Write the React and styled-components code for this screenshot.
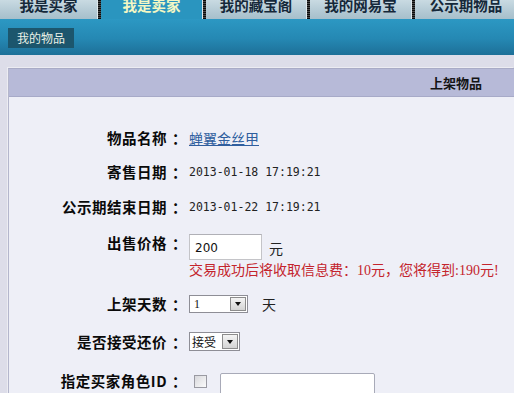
import React from "react";
import styled, { createGlobalStyle } from "styled-components";

const Global = createGlobalStyle`
  html, body { margin: 0; padding: 0; }
  body {
    background: #dddde9;
    font-family: "Noto Sans CJK SC", "Noto Sans", sans-serif;
    overflow: hidden;
    width: 514px;
    height: 393px;
  }
`;

const TabBar = styled.div`
  display: flex;
  height: 19px;
  overflow: hidden;
  background: #b2c8d3;
`;

const Tab = styled.div`
  flex: 0 0 ${(p) => p.w}px;
  height: 19px;
  display: flex;
  justify-content: center;
  align-items: flex-start;
  overflow: hidden;
  background: ${(p) =>
    p.active
      ? "#2a95bf"
      : "linear-gradient(#c9dae2, #b3c9d4 60%, #a6bfcb)"};
  color: ${(p) => (p.active ? "#f3f7c4" : "#15283a")};
  font-size: 14.5px;
  font-weight: 700;
`;

const TabText = styled.span`
  display: block;
  line-height: 15px;
  margin-top: -3px;
  white-space: nowrap;
`;

const Sep = styled.div`
  flex: 0 0 4px;
  height: 19px;
  border-left: 1px solid #dfe8ec;
  box-sizing: border-box;
  background: repeating-linear-gradient(#0c0c0c 0 1px, #4a4a4a 1px 2px);
`;

const SubBar = styled.div`
  height: 36px;
  background: linear-gradient(#2c98c3, #2588b3 55%, #1d7098);
  display: flex;
  align-items: flex-start;
  padding: 9px 0 0 8px;
  box-sizing: border-box;
`;

const SubTab = styled.div`
  width: 66px;
  height: 20px;
  background: #1c566d;
  color: #e9f1e6;
  font-size: 12px;
  line-height: 20px;
  text-align: center;
`;

const Page = styled.div`
  padding: 13px 0 0 8px;
`;

const Panel = styled.div`
  border-top: 1px solid #a9abc6;
  border-left: 1px solid #b4b6cc;
  box-shadow: -1px -1px 0 #ececf2;
  background: #eeeff7;
  height: 330px;
`;

const PanelHead = styled.div`
  height: 27px;
  background: #b7bad8;
  border-bottom: 1px solid #a7aac8;
  display: flex;
  justify-content: flex-end;
  align-items: center;
  padding-right: 32px;
  font-size: 13px;
  font-weight: 700;
  color: #141414;
`;

const Body = styled.div`
  padding-top: 24px;
`;

const Row = styled.div`
  display: grid;
  grid-template-columns: 178px 1fr;
  column-gap: 2px;
  height: ${(p) => p.h}px;
  align-items: ${(p) => (p.top ? "start" : "center")};
`;

const Label = styled.div`
  text-align: right;
  font-size: 14.5px;
  font-weight: 700;
  letter-spacing: 0.5px;
  color: #0a0a0a;
  line-height: 18px;
  margin-top: ${(p) => p.mt || 0}px;
  white-space: nowrap;
`;

const Colon = styled.span`
  margin-left: 5px;
`;

const Value = styled.div`
  display: flex;
  flex-direction: ${(p) => (p.col ? "column" : "row")};
  align-items: ${(p) => (p.col ? "flex-start" : "center")};
  margin-top: ${(p) => p.mt || 0}px;
`;

const ItemLink = styled.a`
  color: #2f5e9e;
  font-size: 14px;
  text-decoration: underline;
  cursor: pointer;
`;

const DateText = styled.span`
  font-family: "DejaVu Sans Mono", "Liberation Mono", monospace;
  font-size: 11.5px;
  color: #222;
`;

const PriceInput = styled.div`
  width: 73px;
  height: 26px;
  box-sizing: border-box;
  background: #fff;
  border: 1px solid #c4c4c8;
  border-top-color: #b0b0b6;
  font-family: "DejaVu Sans", sans-serif;
  font-size: 12px;
  color: #111;
  padding: 6px 0 0 5px;
`;

const Unit = styled.span`
  font-size: 14px;
  color: #222;
  margin-left: ${(p) => p.ml}px;
  margin-top: ${(p) => p.mt || 0}px;
`;

const InlineRow = styled.div`
  display: flex;
  align-items: center;
`;

const Notice = styled.div`
  color: #c4242c;
  font-size: 14px;
  line-height: 18px;
  white-space: nowrap;
  font-family: "Noto Sans CJK SC", sans-serif;
`;

const NumText = styled.span`
  font-family: "Liberation Serif", serif;
`;

const Select = styled.div`
  width: ${(p) => p.w}px;
  height: ${(p) => p.h}px;
  box-sizing: border-box;
  border: 1px solid #8e8e96;
  background: #fff;
  display: flex;
  align-items: center;
  justify-content: space-between;
  padding: 1px;
  font-size: 12px;
  color: #111;
`;

const SelText = styled.span`
  padding-left: ${(p) => p.pl}px;
  font-family: ${(p) => (p.num ? '"Liberation Serif", serif' : '"Noto Sans CJK SC", sans-serif')};
`;

const Arrow = styled.div`
  width: 16px;
  height: 100%;
  box-sizing: border-box;
  border: 1px solid #8c8c8c;
  background: linear-gradient(#f4f4f4, #d4d4d4);
  display: flex;
  align-items: center;
  justify-content: center;
  &::after {
    content: "";
    border-left: 3.5px solid transparent;
    border-right: 3.5px solid transparent;
    border-top: 4px solid #111;
  }
`;

const Check = styled.div`
  width: 13px;
  height: 13px;
  box-sizing: border-box;
  border: 1px solid #9a9aa2;
  background: linear-gradient(135deg, #d8d8dc, #fbfbfb);
  margin-left: 5px;
`;

const TextBox = styled.div`
  width: 155px;
  height: 26px;
  box-sizing: border-box;
  background: #fff;
  border: 1px solid #a8aab8;
  border-radius: 2px;
  margin-left: 13px;
  margin-top: 10px;
`;

export default function App() {
  return (
    <>
      <Global />
      <TabBar>
        <Tab w={97}><TabText>我是买家</TabText></Tab>
        <Sep />
        <Tab w={101} active><TabText>我是卖家</TabText></Tab>
        <Sep />
        <Tab w={100}><TabText>我的藏宝阁</TabText></Tab>
        <Sep />
        <Tab w={101}><TabText>我的网易宝</TabText></Tab>
        <Sep />
        <Tab w={102}><TabText>公示期物品</TabText></Tab>
      </TabBar>
      <SubBar>
        <SubTab>我的物品</SubTab>
      </SubBar>
      <Page>
        <Panel>
          <PanelHead>上架物品</PanelHead>
          <Body>
            <Row h={34}>
              <Label>物品名称<Colon>：</Colon></Label>
              <Value><ItemLink>蝉翼金丝甲</ItemLink></Value>
            </Row>
            <Row h={34}>
              <Label>寄售日期<Colon>：</Colon></Label>
              <Value><DateText>2013-01-18 17:19:21</DateText></Value>
            </Row>
            <Row h={36}>
              <Label>公示期结束日期<Colon>：</Colon></Label>
              <Value><DateText>2013-01-22 17:19:21</DateText></Value>
            </Row>
            <Row h={60} top>
              <Label mt={9}>出售价格<Colon>：</Colon></Label>
              <Value col mt={9}>
                <InlineRow>
                  <PriceInput>200</PriceInput>
                  <Unit ml={7} mt={2}>元</Unit>
                </InlineRow>
                <Notice>
                  交易成功后将收取信息费：<NumText>10</NumText>元，您将得到<NumText>:190</NumText>元<NumText>!</NumText>
                </Notice>
              </Value>
            </Row>
            <Row h={38}>
              <Label>上架天数<Colon>：</Colon></Label>
              <Value>
                <Select w={59} h={18}>
                  <SelText pl={3} num>1</SelText>
                  <Arrow />
                </Select>
                <Unit ml={14}>天</Unit>
              </Value>
            </Row>
            <Row h={37}>
              <Label>是否接受还价<Colon>：</Colon></Label>
              <Value>
                <Select w={51} h={19}>
                  <SelText pl={1}>接受</SelText>
                  <Arrow />
                </Select>
              </Value>
            </Row>
            <Row h={42}>
              <Label>指定买家角色ID<Colon>：</Colon></Label>
              <Value>
                <Check />
                <TextBox />
              </Value>
            </Row>
          </Body>
        </Panel>
      </Page>
    </>
  );
}
